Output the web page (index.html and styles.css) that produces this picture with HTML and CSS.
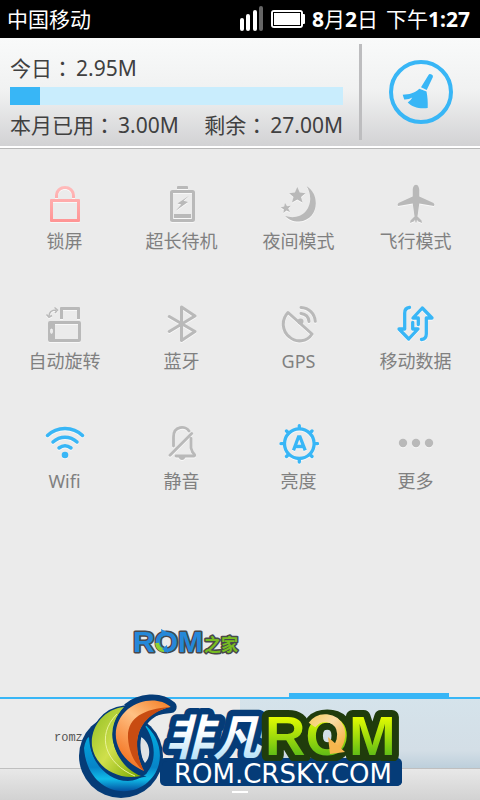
FILE: index.html
```html
<!DOCTYPE html>
<html lang="zh-CN">
<head>
<meta charset="utf-8">
<meta name="viewport" content="width=device-width, initial-scale=1">
<title>中国移动</title>
<link rel="stylesheet" href="styles.css">
</head>
<body>
<header class="status">
  <span class="carrier">中国移动</span>
  <div class="status-right">
    <svg width="24" height="26" viewBox="0 0 24 26" aria-hidden="true"><g fill="#fff"><rect x="0" y="12" width="4" height="13" rx="2"/><rect x="6" y="8" width="4" height="17" rx="2"/><rect x="13" y="4" width="4" height="21" rx="2"/></g><rect x="19" y="0" width="4" height="25" rx="2" fill="#666"/></svg>
    <svg width="34" height="18" viewBox="0 0 34 18" aria-hidden="true"><rect width="32" height="18" rx="3" fill="#fff"/><rect x="31" y="4" width="3" height="10" rx="1" fill="#fff"/><rect x="2.5" y="2.5" width="27" height="13" fill="#fff" stroke="#000"/></svg>
    <time class="clock"><span><b>8</b>月<b>2</b>日</span><span>下午<b>1:27</b></span></time>
  </div>
</header>
<section class="traffic">
  <div class="usage">
    <p class="line">今日<span class="colon" lang="zh-TW">：</span>2.95M</p>
    <div class="bar"><div class="bar-fill"></div></div>
    <p class="line split"><span>本月已用<span class="colon" lang="zh-TW">：</span>3.00M</span><span>剩余<span class="colon" lang="zh-TW">：</span>27.00M</span></p>
  </div>
  <div class="clean-area">
    <button class="clean" type="button" aria-label="清理">
      <svg width="64" height="64" viewBox="0 0 64 64"><circle cx="32" cy="32" r="30" fill="none" stroke="#38b6f6" stroke-width="4"/><path fill="#38b6f6" d="M39.5 15Q40.300 13.500 42 14.300L43 14.800Q44.500 15.600 43.800 17.300L37.700 30L32 27.300ZM30.300 28.700L37.500 31.500C38.500 36 39 42 38.700 48C30 49 23 47 18.700 42.500Q22 40.500 23.300 37.500Q20 39.700 15.200 39.500L13.700 34.700C20 34.500 26 33 30.300 28.700Z"/></svg>
    </button>
  </div>
</section>
<main class="panel">
  <div class="tiles">
    <button class="tile" type="button">
      <svg class="icon" viewBox="0 0 40 40"><defs><linearGradient id="pink" x2="0" y2="1"><stop stop-color="#fbb"/><stop offset="1" stop-color="#ff9494"/></linearGradient></defs><path fill="url(#pink)" d="M6 15H34Q35 15 35 16V37Q35 38 34 38H6Q5 38 5 37V16Q5 15 6 15ZM8 18V35H32V18ZM10 14V12C10 -1.300 30 -1.300 30 12V14H27V12C27 2.700 13 2.700 13 12V14Z"/></svg>
      <span>锁屏</span></button>
    <button class="tile" type="button">
      <svg class="icon" viewBox="0 0 40 40"><path fill="#b9b9b9" d="M16 2H25Q26 2 26 3V5H15V3Q15 2 16 2ZM12 30H29V34H12Z"/><path fill="#b9b9b9" d="M27 11.700L15.500 19.500L19.300 20.500L13.700 26.700L26 18L21.500 16.800Z"/><rect x="9.500" y="7.500" width="22" height="29" rx="1" fill="none" stroke="#b9b9b9" stroke-width="3"/></svg>
      <span>超长待机</span></button>
    <button class="tile" type="button">
      <svg class="icon" viewBox="0 0 40 40"><path fill="#b9b9b9" d="M27.700 2.300C42 11 39.500 36 20 37.500C13.500 37.500 9 35.500 6.300 32C14 34.500 22 33 27 27C33 19.500 32 9.500 27.700 2.300ZM18.300 3L20.700 8.500L26.500 9.200L22 13L23.500 18.500L18.300 15.500L13 18.500L14.500 13L10.200 9.200L15.900 8.500ZM6 19L8 22.200L11.700 21.700L9.200 24.500L11 28L7.400 26.500L4.500 29L4.800 25.300L1.700 23.400L5.200 22.600Z"/></svg>
      <span>夜间模式</span></button>
    <button class="tile" type="button">
      <svg class="icon" viewBox="0 0 40 40"><path fill="#b9b9b9" d="M20 .7C22.500 .7 23.200 4 23.300 6V12.500L37.500 19Q39 20.500 38 22L23.300 19.500L21.500 32.500L25.500 36.500L26 39L21.800 37.300L21 35.500L20.500 38.500H19.500L19 35.500L18.200 37.300L14 39L14.500 36.500L18.500 32.500L16.700 19.500L2 22Q1 20.500 2.500 19L16.700 12.500V6C16.800 4 17.500 .7 20 .7Z"/></svg>
      <span>飞行模式</span></button>
    <button class="tile" type="button">
      <svg class="icon" viewBox="0 0 40 40"><path fill="#b9b9b9" fill-rule="evenodd" d="M15 15V4Q15 3 16 3H34Q35 3 35 4V15H32V6H18V15ZM5 17H34Q36 17 36 19V36Q36 38 34 38H5Q3 38 3 36V19Q3 17 5 17ZM10 20V35H33V20ZM6.500 24.500Q5 24.500 5 27.200Q5 30 6.500 30Q8 30 8 27.200Q8 24.500 6.500 24.500Z"/><path d="M4 12Q4.500 6 11 6M1.500 10.500L4 13.200L7 11.500M9.500 3.500L12.500 6L10 9" fill="none" stroke="#b9b9b9" stroke-width="1.500"/></svg>
      <span>自动旋转</span></button>
    <button class="tile" type="button">
      <svg class="icon" viewBox="0 0 40 40"><path d="M7.300 12.500L33 27.500L19.500 36.500V3L33 12L7.300 27.500" fill="none" stroke="#b9b9b9" stroke-width="3" stroke-linecap="round" stroke-linejoin="round"/></svg>
      <span>蓝牙</span></button>
    <button class="tile" type="button">
      <svg class="icon" viewBox="0 0 40 40"><g fill="none" stroke="#b9b9b9" stroke-width="3" stroke-linecap="round" stroke-linejoin="round"><path d="M9 8.500L33 30C28 38 17 39 10.500 33C3 27 2 16 9 8.500ZM22 9.500C26.500 10 29.500 13 30 17.500M22 3.500C30 4 35.500 9.500 36.300 17.300"/></g><circle cx="21.500" cy="17.500" r="3" fill="#b9b9b9"/></svg>
      <span>GPS</span></button>
    <button class="tile" type="button">
      <svg class="icon" viewBox="0 0 40 40"><g fill="none" stroke="#38b6f6" stroke-width="3.300" stroke-linejoin="round" stroke-linecap="round"><path d="M13.500 3.500Q8.700 4 8.700 9V25H3L12.700 35L22 25H16.700V18.500"/><path d="M13.500 3.500Q8.700 4 8.700 9V25H3L12.700 35L22 25H16.700V18.500" transform="rotate(180 19.500 19.500)"/></g></svg>
      <span>移动数据</span></button>
    <button class="tile" type="button">
      <svg class="icon" viewBox="0 0 40 40"><g fill="none" stroke="#38b6f6" stroke-width="3.500" stroke-linecap="round"><path d="M2.500 11.500C12 2 28 2 37.500 11.500M8 18C15 11.500 25 11.500 32 18M14 24Q20 19.500 26 24"/></g><circle cx="20" cy="31" r="3.300" fill="#38b6f6"/></svg>
      <span>Wifi</span></button>
    <button class="tile" type="button">
      <svg class="icon" viewBox="0 0 40 40"><g fill="none" stroke="#b9b9b9" stroke-width="2.800" stroke-linecap="round" stroke-linejoin="round"><path d="M11.500 22V13C11.500 1.500 24 1.500 27 7M8 31.300L29.700 9.500M29 14.500V24Q30 28.500 32.500 30.500Q33 32 31.500 32H14"/></g><path d="M16.500 33H23.500Q22.500 36 20 36T16.500 33Z" fill="#b9b9b9"/></svg>
      <span>静音</span></button>
    <button class="tile" type="button">
      <svg class="icon" viewBox="0 0 40 40"><g fill="none" stroke="#38b6f6" stroke-width="3.300"><circle cx="20.300" cy="19.700" r="14.800"/><path stroke-linecap="round" d="M20.300 4V1.700M20.300 36V38M4.500 19.700H2M36 19.700H38.500M9 8.500L7.500 7M31.500 8.500L33 7M9 31L7.500 32.500M31.500 31L33 32.500"/><path d="M14.500 26.300L19.500 13H21L26.200 26.300M16.500 22.500H24"/></g></svg>
      <span>亮度</span></button>
    <button class="tile" type="button">
      <svg class="icon" viewBox="0 0 40 40"><g fill="#b9b9b9"><circle cx="7" cy="19" r="4.200"/><circle cx="20" cy="19" r="4.200"/><circle cx="33" cy="19" r="4.200"/></g></svg>
      <span>更多</span></button>
  </div>
  <svg class="brand" width="112" height="36" viewBox="0 0 112 36" role="img" aria-label="ROM之家">
    <g paint-order="stroke" stroke="#48484c" stroke-width="3" stroke-linejoin="round">
      <text class="brand-latin" x="3" y="26" fill="#2588d9">ROM</text>
      <text class="brand-cjk" x="74" y="25" fill="#77bd20">之家</text>
    </g>
    <path d="M27 17C27.500 21 30 24 34 24" fill="none" stroke="#8bd030" stroke-width="4"/>
    <path d="M31 3L37 6L32 11ZM37 19L32 23L38 27Z" fill="#2588d9"/>
  </svg>
</main>
<footer class="dock">
  <nav class="tabs">
    <button class="tab tab-left" type="button">romz</button>
    <button class="tab tab-right" type="button" aria-label="开关"></button>
  </nav>
  <div class="handle-area"><span class="handle"></span></div>
  <svg class="badge" width="328" height="110" viewBox="0 0 328 110" role="img" aria-label="非凡ROM ROM.CRSKY.COM">
    <defs>
      <linearGradient id="green" x2="1" y2="1"><stop stop-color="#8fbd22"/><stop offset=".5" stop-color="#d0e04c"/><stop offset="1" stop-color="#78a800"/></linearGradient>
      <linearGradient id="orange" x1="1" x2=".4" y2="1"><stop stop-color="#f47b20"/><stop offset=".45" stop-color="#ffc184"/><stop offset="1" stop-color="#f47524"/></linearGradient>
      <linearGradient id="ring" x2="0" y2="1"><stop stop-color="#00b5e5"/><stop offset=".65" stop-color="#0784c8"/><stop offset=".82" stop-color="#10bce8"/><stop offset="1" stop-color="#034fa0"/></linearGradient>
      <linearGradient id="ice" gradientUnits="userSpaceOnUse" x1="0" y1="22" x2="0" y2="68"><stop offset=".4" stop-color="#fff"/><stop offset="1" stop-color="#b9e3f8"/></linearGradient>
      <linearGradient id="lime" gradientUnits="userSpaceOnUse" x1="0" y1="25" x2="0" y2="66"><stop stop-color="#eaff00"/><stop offset="1" stop-color="#5dbb16"/></linearGradient>
      <linearGradient id="gold" x2="1" y2="1"><stop stop-color="#f6d06c"/><stop offset=".4" stop-color="#fbdca4"/><stop offset="1" stop-color="#f6ae3c"/></linearGradient>
    </defs>
    <g fill="#053c78">
      <circle cx="43" cy="66" r="42"/>
      <rect x="82" y="68" width="242" height="28" rx="5"/>
    </g>
    <text class="badge-cjk" x="87" y="65" fill="url(#ice)" stroke="#053c78" stroke-width="13" stroke-linejoin="round" paint-order="stroke">非凡</text>
    <path fill="#dfe3e6" d="M63 47C72 52 74 66 67 73C62 66 60 57 63 47Z"/>
    <path fill="url(#ring)" d="M65 33C85 48 88 76 70 92C49 111 9 101 6 58Q8 48 11 47C12 72 29 91 50 91C77 90 84 58 65 33Z"/>
    <path fill="none" stroke="#053c78" stroke-width="12" stroke-linejoin="round" d="M51 42C52 30 68 19 92.700 17C82 7 62 9 50 19"/>
    <path fill="url(#green)" stroke="#053c78" stroke-width="3" paint-order="stroke" d="M46 17C26 19 12 37 14 56C17 76 38 91 63 86C39 77 23 43 46 17Z"/>
    <path fill="none" stroke="#e9f39a" d="M39 24C17 46 28 74 57 86"/>
    <path fill="url(#orange)" stroke="#053c78" stroke-width="7" stroke-linejoin="round" paint-order="stroke" d="M92.700 17C82 7 62 9 50 19C30 36 34 67 66 81C54 60 54 25 92.700 17Z"/>
    <path fill="#c84c12" d="M92 17C65 19 49 28 50 48C51 63 57 74 66 81C54 58 55 27 92 17Z"/>
    <text class="badge-rom" x="187" y="65" fill="url(#lime)" stroke="#203c0c" stroke-width="14" stroke-linejoin="round" paint-order="stroke">ROM</text>
    <path fill="none" stroke="url(#gold)" stroke-width="8" d="M234 35C241 25 257 26 262 38C265 46 262 55 257 60"/>
    <path fill="#f7b64d" d="M250 47L267 62L252 64Z"/>
    <rect x="84" y="71" width="240" height="25" rx="5" fill="#053c78"/>
    <text class="badge-url" x="205" y="93" text-anchor="middle" fill="#fff">ROM.CRSKY.COM</text>
  </svg>
</footer>
</body>
</html>
```
FILE: styles.css
```css
* {
  box-sizing: border-box;
}

body {
  margin: 0;
  min-height: 100vh;
  display: flex;
  flex-direction: column;
  background: #ebebeb;
  color: #404040;
  font-family: "Noto Sans", "Noto Sans CJK SC", sans-serif;
  overflow-x: hidden;
}

button {
  border: 0;
  padding: 0;
  background: none;
  font: inherit;
  color: inherit;
}

svg {
  display: block;
}

.status {
  display: flex;
  justify-content: space-between;
  align-items: center;
  height: 38px;
  padding: 0 10px 0 7px;
  background: #000;
  color: #fff;
  font-size: 21px;
  line-height: 38px;
}

.status-right {
  display: flex;
  align-items: center;
  gap: 7px;
}

.clock {
  display: flex;
  gap: 8px;
}

.traffic {
  display: flex;
  padding: 6px 0;
  border-bottom: 2px solid #fff;
  background: linear-gradient(#f9fafa, #f0f1f1 50%, #d2d2d4);
}

.usage {
  flex: 1;
  padding: 8px 16px 0 10px;
}

.line {
  margin: 0;
  font-size: 21px;
  line-height: 30px;
}

.split {
  display: flex;
  justify-content: space-between;
  padding-top: 4px;
}

.colon {
  margin-right: 3px;
  font-family: "Noto Sans CJK TC", sans-serif;
}

.bar {
  height: 18px;
  margin-top: 4px;
  background: #c9edfd;
}

.bar-fill {
  width: 9%;
  height: 100%;
  background: #38b6f6;
}

.clean-area {
  display: flex;
  align-items: center;
  justify-content: center;
  width: 121px;
  border-left: 3px solid #bdbdbf;
}

.panel {
  flex: 1;
  display: flex;
  flex-direction: column;
  border-top: 1px solid #b8b8b8;
}

.tiles {
  display: grid;
  grid-template-columns: repeat(4, 1fr);
  padding: 35px 6px 0;
}

.tile {
  display: flex;
  flex-direction: column;
  align-items: center;
  height: 120px;
  color: #808080;
  font-size: 18px;
  line-height: 26px;
}

.icon {
  width: 40px;
  height: 40px;
  margin-bottom: 4px;
  filter: drop-shadow(0 1px 0 #f8f8f8);
}

.brand {
  margin: 82px 0 0 130px;
}

.brand-latin {
  font: bold 30px "Liberation Sans", sans-serif;
}

.brand-cjk {
  font: bold 17px "Noto Sans CJK SC", sans-serif;
}

.dock {
  position: relative;
}

.tabs {
  display: grid;
  grid-template-columns: 1fr 1fr;
  height: 71px;
  border-top: 2px solid #38b6f6;
}

.tab {
  position: relative;
}

.tab-left {
  padding: 8px 0 0 54px;
  text-align: left;
  font-family: "Liberation Mono", monospace;
  font-size: 12px;
  color: #555;
}

.tab-right {
  background: linear-gradient(#d5e3eb, #d3dee6 75%, #bdcfdb);
}

.tab-right::before {
  content: "";
  position: absolute;
  top: -6px;
  left: 49px;
  width: 160px;
  height: 6px;
  background: #38b6f6;
}

.handle-area {
  display: flex;
  justify-content: center;
  height: 32px;
  padding-top: 22px;
  border-top: 1px solid #bfbfbf;
  background: linear-gradient(#e8e8e8, #d2d2d2);
}

.handle {
  width: 16px;
  height: 2px;
  background: #fff;
}

.badge {
  position: absolute;
  left: 78px;
  bottom: 0;
}

.badge-cjk {
  font: italic 700 48px "Noto Sans CJK SC", sans-serif;
}

.badge-rom {
  font: bold 56px "Liberation Sans", sans-serif;
}

.badge-url {
  font: 26px "DejaVu Sans", sans-serif;
}
```
